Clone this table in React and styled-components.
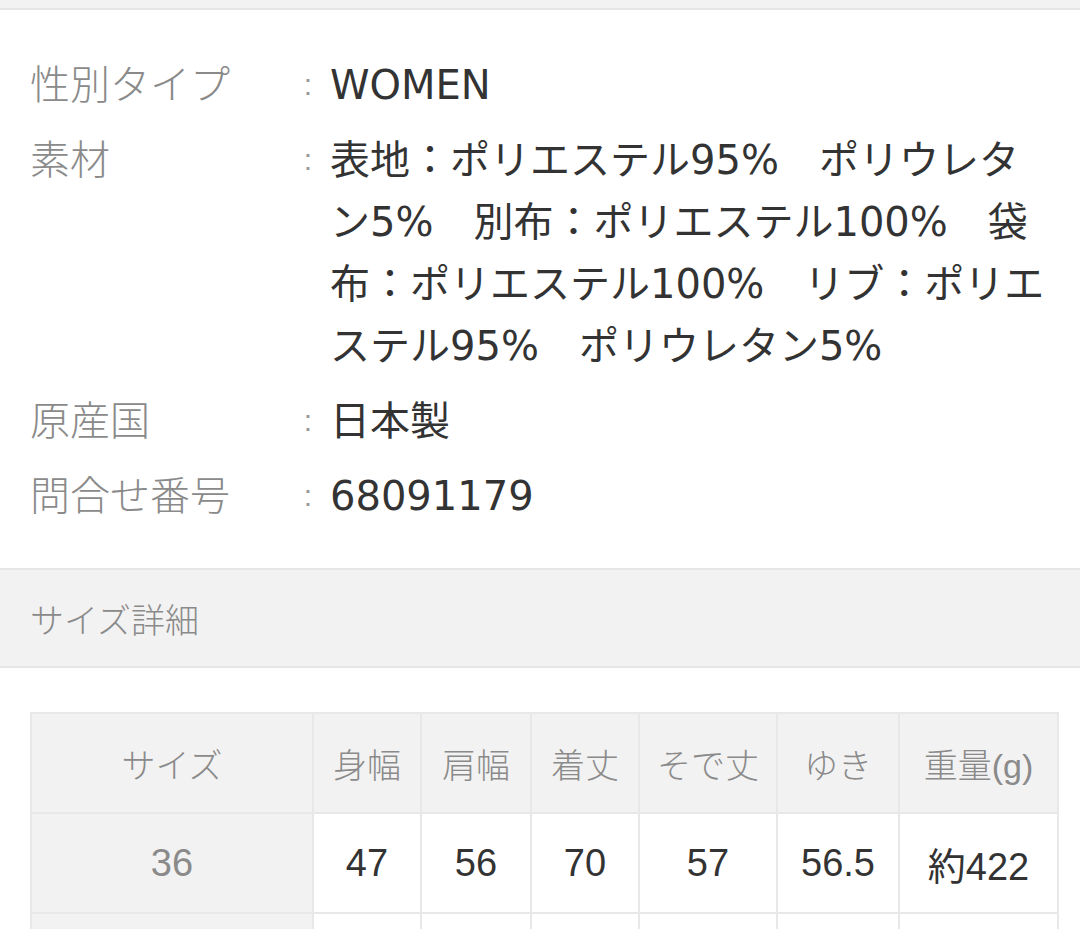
import React from 'react'
import styled, { createGlobalStyle } from 'styled-components'

const GlobalStyle = createGlobalStyle`
  body {
    margin: 0;
    background: #fff;
    font-family: "Liberation Sans", "Noto Sans CJK JP", sans-serif;
    -webkit-font-smoothing: antialiased;
  }
`

const TopBar = styled.div`
  height: 8px;
  background: #f2f2f2;
  border-bottom: 2px solid #e6e6e6;
`

const InfoList = styled.dl`
  margin: 0;
  padding: 44px 30px 41px 30px;
  display: grid;
  grid-template-columns: 256px 44px 1fr;
  row-gap: 13px;
  font-size: 40px;
  line-height: 62px;
`

const Label = styled.dt`
  color: #8a8a8a;
  font-weight: 300;
`

const Colon = styled.span`
  color: #9a9a9a;
  text-align: center;
  font-size: 30px;
`

const Value = styled.dd`
  margin: 0;
  color: #333;
  font-family: "DejaVu Sans", "Noto Sans CJK JP", sans-serif;
  font-weight: 400;
`

const SectionHead = styled.div`
  background: #f2f2f2;
  border-top: 2px solid #e6e6e6;
  border-bottom: 2px solid #e6e6e6;
  height: 96px;
  display: flex;
  align-items: center;
  padding-left: 30px;
  font-size: 34px;
  color: #8a8a8a;
  font-weight: 300;
`

const TableWrap = styled.div`
  padding: 44px 22px 0 30px;
`

const SizeTable = styled.table`
  border-collapse: collapse;
  table-layout: fixed;
  width: 1027px;
`

const Cell = styled.td`
  border: 2px solid #e8e8e8;
  height: 98px;
  padding: 0;
  text-align: center;
  background: ${(p) => (p.$head ? '#f2f2f2' : '#fff')};
  color: ${(p) => (p.$head ? '#8a8a8a' : '#333')};
  font-size: ${(p) => (p.$small ? '34px' : '38px')};
  font-weight: ${(p) => (p.$head ? 300 : 400)};
`

const info = [
  ['性別タイプ', 'WOMEN'],
  [
    '素材',
    '表地：ポリエステル95%　ポリウレタン5%　別布：ポリエステル100%　袋布：ポリエステル100%　リブ：ポリエステル95%　ポリウレタン5%',
  ],
  ['原産国', '日本製'],
  ['問合せ番号', '68091179'],
]

const widths = [282, 108, 110, 108, 138, 122, 159]
const heads = ['サイズ', '身幅', '肩幅', '着丈', 'そで丈', 'ゆき', '重量(g)']
const rows = [
  ['36', '47', '56', '70', '57', '56.5', '約422'],
  ['', '', '', '', '', '', ''],
]

export default function App() {
  return (
    <>
      <GlobalStyle />
      <TopBar />
      <InfoList>
        {info.map(([k, v]) => (
          <React.Fragment key={k}>
            <Label>{k}</Label>
            <Colon>:</Colon>
            <Value>{v}</Value>
          </React.Fragment>
        ))}
      </InfoList>
      <SectionHead>サイズ詳細</SectionHead>
      <TableWrap>
        <SizeTable>
          <colgroup>
            {widths.map((w, i) => (
              <col key={i} style={{ width: w }} />
            ))}
          </colgroup>
          <tbody>
            <tr>
              {heads.map((h) => (
                <Cell key={h} $head $small>
                  {h}
                </Cell>
              ))}
            </tr>
            {rows.map((r, ri) => (
              <tr key={ri}>
                {r.map((c, ci) => (
                  <Cell key={ci} $head={ci === 0}>
                    {c}
                  </Cell>
                ))}
              </tr>
            ))}
          </tbody>
        </SizeTable>
      </TableWrap>
    </>
  )
}
